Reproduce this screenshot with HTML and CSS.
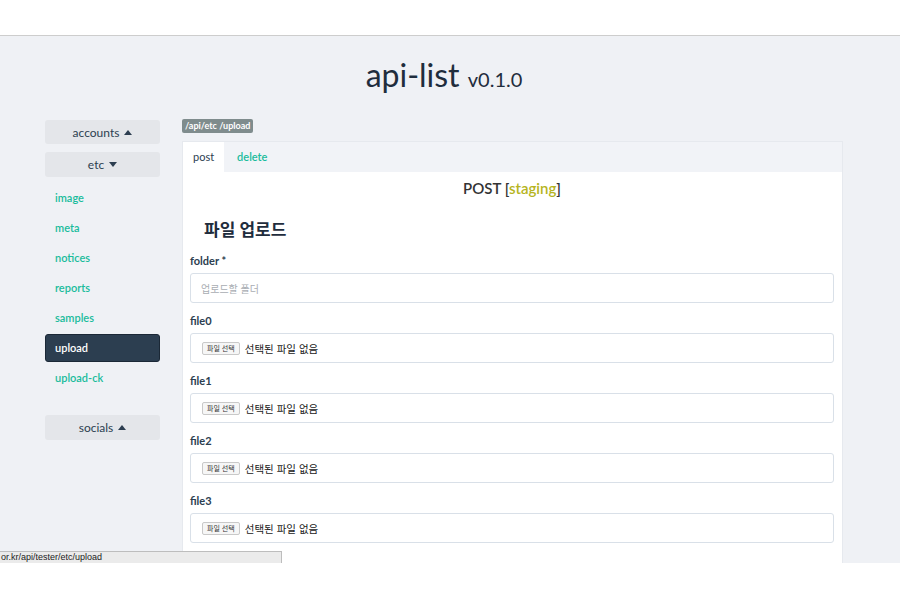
FILE: index.html
```html
<!DOCTYPE html>
<html lang="ko">
<head>
<meta charset="utf-8">
<title>api-list</title>
<link rel="stylesheet" href="styles.css">
</head>
<body>
<div class="topbar"></div>
<div class="app">
  <header class="header">
    <h1 class="title">api-list <small>v0.1.0</small></h1>
  </header>
  <div class="layout">
    <nav class="sidebar">
      <div class="group-btn">accounts <svg class="tri" width="8" height="5" viewBox="0 0 8 5"><path d="M0 5 L4 0 L8 5 Z"/></svg></div>
      <div class="group-btn group-gap">etc <svg class="tri" width="8" height="5" viewBox="0 0 8 5"><path d="M0 0 L8 0 L4 5 Z"/></svg></div>
      <ul class="links">
        <li class="link">image</li>
        <li class="link">meta</li>
        <li class="link">notices</li>
        <li class="link">reports</li>
        <li class="link">samples</li>
        <li class="link active">upload</li>
        <li class="link">upload-ck</li>
      </ul>
      <div class="group-btn socials">socials <svg class="tri" width="8" height="5" viewBox="0 0 8 5"><path d="M0 5 L4 0 L8 5 Z"/></svg></div>
    </nav>
    <main class="main">
      <span class="badge">/api/etc /upload</span>
      <section class="panel">
        <div class="tabs">
          <span class="tab tab-active">post</span>
          <span class="tab">delete</span>
        </div>
        <div class="panel-body">
          <div class="method">POST [<span class="env">staging</span>]</div>
          <h2 class="form-title">파일 업로드</h2>
          <div class="fields">
            <div class="field">
              <div class="label">folder *</div>
              <input class="input" type="text" placeholder="업로드할 폴더">
            </div>
            <div class="field">
              <div class="label">file0</div>
              <div class="input file"><span class="file-btn">파일 선택</span><span class="file-text">선택된 파일 없음</span></div>
            </div>
            <div class="field">
              <div class="label">file1</div>
              <div class="input file"><span class="file-btn">파일 선택</span><span class="file-text">선택된 파일 없음</span></div>
            </div>
            <div class="field">
              <div class="label">file2</div>
              <div class="input file"><span class="file-btn">파일 선택</span><span class="file-text">선택된 파일 없음</span></div>
            </div>
            <div class="field">
              <div class="label">file3</div>
              <div class="input file"><span class="file-btn">파일 선택</span><span class="file-text">선택된 파일 없음</span></div>
            </div>
          </div>
        </div>
      </section>
    </main>
  </div>
  <div class="status">or.kr/api/tester/etc/upload</div>
</div>
</body>
</html>
```

FILE: styles.css
```css
* { box-sizing: border-box; }

body {
  margin: 0;
  background: #ffffff;
  font-family: Lato, "Noto Sans CJK KR", sans-serif;
  color: #2c3e50;
}

.topbar {
  height: 36px;
  background: #ffffff;
  border-bottom: 1px solid #cdcdcd;
}

.app {
  position: relative;
  height: 527px;
  overflow: hidden;
  background: #eff1f5;
}

.header {
  height: 83px;
  padding-top: 19px;
  padding-right: 12px;
  text-align: center;
}

.title {
  margin: 0;
  font-size: 32px;
  line-height: 40px;
  font-weight: 400;
  color: #1f2d3d;
}

.title small {
  font-size: 20px;
}

.layout {
  display: flex;
  gap: 22px;
  padding-left: 45px;
}

.sidebar {
  width: 115px;
  padding-top: 1px;
  display: flex;
  flex-direction: column;
}

.group-btn {
  height: 24px;
  background: #e4e6ea;
  border-radius: 3px;
  display: flex;
  align-items: center;
  justify-content: center;
  gap: 5px;
  font-size: 12px;
  color: #2c3e50;
}

.group-gap {
  margin-top: 8px;
  height: 25px;
}

.tri {
  fill: #2c3e50;
}

.links {
  list-style: none;
  margin: 6px 0 0;
  padding: 0;
  display: flex;
  flex-direction: column;
}

.link {
  height: 28px;
  margin: 1px 0;
  padding-left: 10px;
  line-height: 28px;
  font-size: 11px;
  font-weight: 600;
  color: #1abc9c;
  border-radius: 3px;
}

.link.active {
  background: #2c3e50;
  color: #ffffff;
  border: 1px solid #1b2836;
  line-height: 26px;
  padding-left: 9px;
}

.socials {
  margin-top: 22px;
  height: 25px;
}

.main {
  width: 661px;
  display: flex;
  flex-direction: column;
  align-items: flex-start;
}

.badge {
  height: 14px;
  line-height: 14px;
  padding: 0 3px;
  font-size: 9px;
  font-weight: 700;
  color: #ffffff;
  background: #7f8c8d;
  border-radius: 2px;
}

.panel {
  margin-top: 8px;
  width: 100%;
  height: 520px;
  background: #ffffff;
  border: 1px solid #e6e9ee;
}

.tabs {
  display: flex;
  height: 30px;
  background: #f1f3f7;
}

.tab {
  padding: 0 13px;
  line-height: 30px;
  font-size: 11px;
  font-weight: 600;
  color: #1abc9c;
}

.tab-active {
  padding: 0 10px;
  background: #ffffff;
  color: #2c3e50;
  font-weight: 400;
}

.panel-body {
  padding: 0 8px 0 7px;
}

.method {
  margin-top: 6px;
  line-height: 20px;
  text-align: center;
  font-size: 15px;
  font-weight: 600;
  color: #333333;
}

.env {
  color: #b6b421;
}

.form-title {
  margin: 20px 0 0;
  padding-left: 14px;
  line-height: 24px;
  font-size: 17px;
  font-weight: 700;
  color: #1f2d3d;
}

.fields {
  margin-top: 11px;
}

.label {
  line-height: 16px;
  margin-bottom: 4px;
  font-size: 11px;
  font-weight: 700;
  color: #2c3e50;
}

.input {
  display: block;
  width: 100%;
  height: 30px;
  margin: 0 0 10px;
  border: 1px solid #d9e0e8;
  border-radius: 3px;
  background: #ffffff;
  padding: 0 10px;
  font-family: "Noto Sans CJK KR", sans-serif;
  font-size: 10px;
  color: #333333;
  outline: none;
}

.input::placeholder {
  color: #a9adb3;
}

.file {
  display: flex;
  align-items: center;
  padding-left: 11px;
}

.file-btn {
  height: 13px;
  padding: 0 4px;
  line-height: 11px;
  font-size: 7px;
  color: #333333;
  background: #f6f6f6;
  border: 1px solid #c9c9c9;
  border-radius: 2px;
}

.file-text {
  margin-left: 5px;
  font-size: 10.5px;
  color: #222222;
}

.status {
  position: absolute;
  left: 0;
  bottom: 0;
  width: 282px;
  height: 12px;
  padding-left: 1px;
  line-height: 11px;
  font-family: "Liberation Sans", sans-serif;
  font-size: 9px;
  color: #222222;
  background: #ebebeb;
  border-top: 1px solid #bdbdbd;
  border-right: 1px solid #bdbdbd;
}
```
